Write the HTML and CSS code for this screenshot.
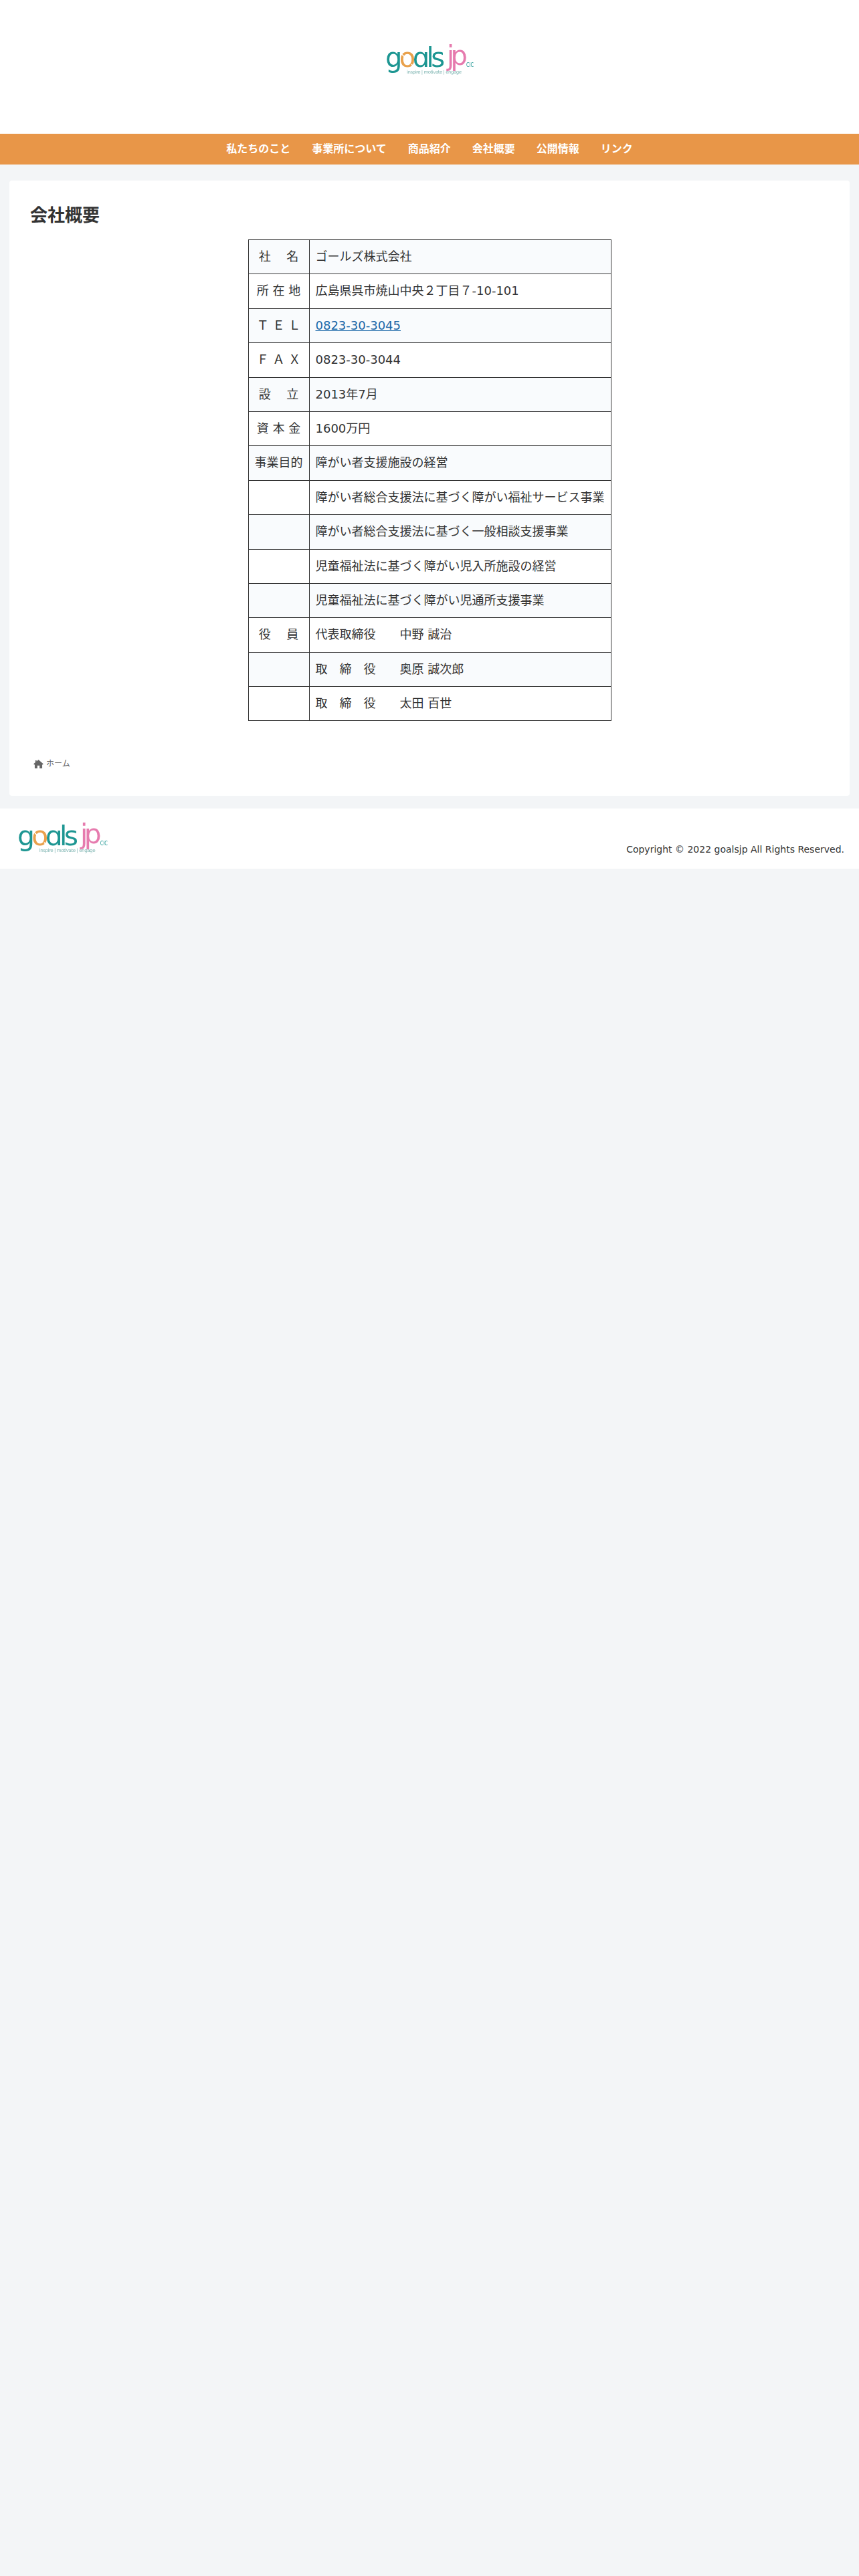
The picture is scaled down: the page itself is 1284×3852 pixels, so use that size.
FILE: index.html
```html
<!DOCTYPE html>
<html lang="ja">
<head>
<meta charset="utf-8">
<title>会社概要 | goalsjp</title>
<link rel="stylesheet" href="styles.css">
</head>
<body>

<header class="site-header">
    <a class="logo-link" href="#">
        <svg class="logo logo-header" viewBox="0 0 134 70" role="img" aria-label="goals jp">
            <text class="logo-word" x="0" y="41" textLength="89" lengthAdjust="spacing">g<tspan class="logo-o">o</tspan>ɑls</text>
            <path class="logo-gap" d="M24.5 22 L28.5 26 M39 37 L43 41"/>
            <text class="logo-jp" x="92" y="38">jp</text>
            <text class="logo-cic" x="121" y="41" textLength="11" lengthAdjust="spacingAndGlyphs">CIC</text>
            <text class="logo-tag" x="32" y="51" textLength="82" lengthAdjust="spacing">inspire | motivate | engage</text>
        </svg>
    </a>
</header>

<nav class="global-nav">
    <ul class="nav-list">
        <li><a href="#">私たちのこと</a></li>
        <li><a href="#">事業所について</a></li>
        <li><a href="#">商品紹介</a></li>
        <li><a href="#">会社概要</a></li>
        <li><a href="#">公開情報</a></li>
        <li><a href="#">リンク</a></li>
    </ul>
</nav>

<main class="card">
    <h1 class="entry-title">会社概要</h1>

    <table class="company-table">
        <tr><td class="label">社　 名</td><td>ゴールズ株式会社</td></tr>
        <tr><td class="label">所 在 地</td><td>広島県呉市焼山中央２丁目７-10-101</td></tr>
        <tr><td class="label">Ｔ Ｅ Ｌ</td><td><a href="#">0823-30-3045</a></td></tr>
        <tr><td class="label">Ｆ Ａ Ｘ</td><td>0823-30-3044</td></tr>
        <tr><td class="label">設　 立</td><td>2013年7月</td></tr>
        <tr><td class="label">資 本 金</td><td>1600万円</td></tr>
        <tr><td class="label">事業目的</td><td>障がい者支援施設の経営</td></tr>
        <tr><td class="label"></td><td>障がい者総合支援法に基づく障がい福祉サービス事業</td></tr>
        <tr><td class="label"></td><td>障がい者総合支援法に基づく一般相談支援事業</td></tr>
        <tr><td class="label"></td><td>児童福祉法に基づく障がい児入所施設の経営</td></tr>
        <tr><td class="label"></td><td>児童福祉法に基づく障がい児通所支援事業</td></tr>
        <tr><td class="label">役　 員</td><td>代表取締役　　中野 誠治</td></tr>
        <tr><td class="label"></td><td>取　締　役　　奥原 誠次郎</td></tr>
        <tr><td class="label"></td><td>取　締　役　　太田 百世</td></tr>
    </table>

    <div class="breadcrumb">
        <svg class="home-icon" viewBox="0 0 16 14" aria-hidden="true">
            <path d="M8 0 L16 7 L14.6 8.2 L14 7.7 V14 H9.8 V9.4 H6.2 V14 H2 V7.7 L1.4 8.2 L0 7 L3 4.4 V1 H5 V2.6 Z"/>
        </svg>
        <a href="#">ホーム</a>
    </div>
</main>

<footer class="site-footer">
    <svg class="logo logo-footer" viewBox="0 0 134 70" role="img" aria-label="goals jp">
        <text class="logo-word" x="0" y="41" textLength="89" lengthAdjust="spacing">g<tspan class="logo-o">o</tspan>ɑls</text>
        <path class="logo-gap" d="M24.5 22 L28.5 26 M39 37 L43 41"/>
        <text class="logo-jp" x="92" y="38">jp</text>
        <text class="logo-cic" x="121" y="41" textLength="11" lengthAdjust="spacingAndGlyphs">CIC</text>
        <text class="logo-tag" x="32" y="51" textLength="82" lengthAdjust="spacing">inspire | motivate | engage</text>
    </svg>
    <div class="copyright">Copyright © 2022 goalsjp All Rights Reserved.</div>
</footer>

</body>
</html>
```

FILE: styles.css
```css
html, body {
    margin: 0;
    padding: 0;
}

body {
    background-color: #f3f5f7;
    color: #333;
    font-family: "DejaVu Sans", "Noto Sans CJK JP", sans-serif;
    font-size: 18px;
    line-height: 1.8;
}

a {
    color: #1967a8;
}

.site-header {
    background-color: #fff;
    height: 200px;
    display: flex;
    align-items: center;
    justify-content: center;
}

.logo-link {
    display: block;
    line-height: 0;
}

.logo {
    display: block;
    filter: blur(0.35px);
}

.logo-header {
    width: 134px;
    height: 70px;
    margin-bottom: 12px;
    margin-left: 2px;
}

.logo-footer {
    width: 137px;
    height: 71.6px;
}

.logo text {
    font-family: "DejaVu Sans", sans-serif;
}

.logo-word {
    font-size: 40px;
    fill: #1d9692;
}

.logo-o {
    fill: #e9a14c;
}

.logo-gap {
    stroke: #fff;
    stroke-width: 1.5;
    fill: none;
}

.logo-jp {
    font-size: 40px;
    letter-spacing: -5.5px;
    fill: #e67bae;
}

.logo-cic {
    font-size: 8px;
    fill: #1d9692;
}

.logo-tag {
    font-size: 7px;
    fill: #7fb5b2;
}

.global-nav {
    background-color: #e89648;
    height: 46px;
}

.nav-list {
    list-style: none;
    margin: 0;
    padding: 0;
    display: flex;
    justify-content: center;
}

.nav-list a {
    display: block;
    padding: 0 16px;
    color: #fff;
    font-size: 16px;
    font-weight: 700;
    line-height: 46px;
    text-decoration: none;
}

.card {
    background-color: #fff;
    border-radius: 4px;
    margin: 24px 14px 19px;
    padding: 33px 31px 32px;
    height: 920px;
    box-sizing: border-box;
}

.entry-title {
    margin: 0 0 16px;
    font-size: 26px;
    font-weight: 700;
    line-height: 39px;
    color: #333;
}

.company-table {
    border-collapse: collapse;
    margin: 0 auto;
}

.company-table td {
    border: 1px solid #333;
    padding: 9px;
    white-space: nowrap;
}

.company-table tr:nth-child(odd) {
    background-color: #f9fbfd;
}

.company-table .label {
    text-align: center;
}

.breadcrumb {
    margin-top: 54px;
    padding-left: 5px;
    display: flex;
    align-items: center;
    gap: 4px;
    font-size: 12px;
    line-height: 20px;
    color: #666;
}

.breadcrumb a {
    color: #666;
    text-decoration: none;
}

.home-icon {
    width: 15px;
    height: 13px;
    fill: #666;
}

.site-footer {
    background-color: #fff;
    height: 90px;
    padding: 13px 22px 0 26px;
    box-sizing: border-box;
    display: flex;
    justify-content: space-between;
    align-items: flex-start;
}

.copyright {
    font-size: 14px;
    line-height: 20px;
    margin-top: 38px;
}
```
